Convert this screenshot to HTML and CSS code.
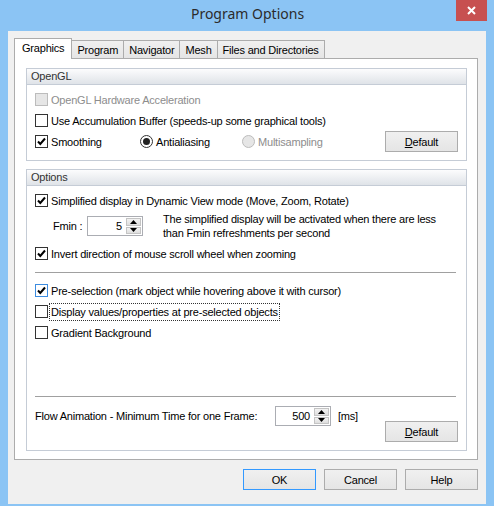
FILE: index.html
```html
<!DOCTYPE html>
<html lang="en">
<head>
  <meta charset="UTF-8">
  <meta name="viewport" content="width=device-width, initial-scale=1.0">
  <title>Program Options</title>
  <link rel="stylesheet" href="styles.css">
</head>
<body>
  <div class="window">
    <!-- Title bar -->
    <div class="titlebar">
      <div class="title">Program Options</div>
      <button class="close" title="Close">
        <svg width="9" height="9" viewBox="0 0 9 9"><path d="M1 1 L8 8 M8 1 L1 8" stroke="#fff" stroke-width="2"/></svg>
      </button>
    </div>

    <div class="client">
      <!-- Tabs -->
      <div class="tabs">
        <div class="tab active">Graphics</div>
        <div class="tab">Program</div>
        <div class="tab">Navigator</div>
        <div class="tab">Mesh</div>
        <div class="tab">Files and Directories</div>
      </div>

      <div class="panel">
        <!-- OpenGL group -->
        <div class="group">
          <div class="group-title">OpenGL</div>
          <div class="group-body">
            <div class="row disabled"><span class="check"></span>OpenGL Hardware Acceleration</div>
            <div class="row"><span class="check"></span>Use Accumulation Buffer (speeds-up some graphical tools)</div>
            <div class="row">
              <div class="cell smooth">
                <span class="check on"><svg viewBox="0 0 11 11"><path d="M2 5.5 L4.3 8 L9 2.5" fill="none" stroke="#000" stroke-width="2"/></svg></span>Smoothing
              </div>
              <div class="cell aa"><span class="radio on"></span>Antialiasing</div>
              <div class="cell disabled"><span class="radio"></span>Multisampling</div>
              <button class="btn push-right"><u>D</u>efault</button>
            </div>
          </div>
        </div>

        <!-- Options group -->
        <div class="group grow">
          <div class="group-title">Options</div>
          <div class="group-body column">
            <div class="row"><span class="check on"><svg viewBox="0 0 11 11"><path d="M2 5.5 L4.3 8 L9 2.5" fill="none" stroke="#000" stroke-width="2"/></svg></span>Simplified display in Dynamic View mode (Move, Zoom, Rotate)</div>

            <div class="fmin-row">
              <span class="fmin-label">Fmin :</span>
              <div class="spin">
                <span class="spin-value">5</span>
                <span class="spin-btns">
                  <span class="spin-btn"><svg width="7" height="4" viewBox="0 0 7 4"><path d="M0 4 L3.5 0 L7 4 Z" fill="#000"/></svg></span>
                  <span class="spin-btn"><svg width="7" height="4" viewBox="0 0 7 4"><path d="M0 0 L3.5 4 L7 0 Z" fill="#000"/></svg></span>
                </span>
              </div>
              <p class="hint">The simplified display will be activated when there are less<br>than Fmin refreshments per second</p>
            </div>

            <div class="row gap3"><span class="check on"><svg viewBox="0 0 11 11"><path d="M2 5.5 L4.3 8 L9 2.5" fill="none" stroke="#000" stroke-width="2"/></svg></span>Invert direction of mouse scroll wheel when zooming</div>

            <div class="sep"></div>

            <div class="row"><span class="check on hover"><svg viewBox="0 0 11 11"><path d="M2 5.5 L4.3 8 L9 2.5" fill="none" stroke="#000" stroke-width="2"/></svg></span>Pre-selection (mark object while hovering above it with cursor)</div>
            <div class="row"><span class="check"></span><span class="focus">Display values/properties at pre-selected objects</span></div>
            <div class="row"><span class="check"></span>Gradient Background</div>

            <div class="bottom">
              <div class="sep"></div>
              <div class="flow-row">
                <div class="flow-left">
                  <span class="flow-label">Flow Animation - Minimum Time for one Frame:</span>
                  <div class="spin">
                    <span class="spin-value">500</span>
                    <span class="spin-btns">
                      <span class="spin-btn"><svg width="7" height="4" viewBox="0 0 7 4"><path d="M0 4 L3.5 0 L7 4 Z" fill="#000"/></svg></span>
                      <span class="spin-btn"><svg width="7" height="4" viewBox="0 0 7 4"><path d="M0 0 L3.5 4 L7 0 Z" fill="#000"/></svg></span>
                    </span>
                  </div>
                  <span class="unit">[ms]</span>
                </div>
                <button class="btn push-right low"><u>D</u>efault</button>
              </div>
            </div>
          </div>
        </div>
      </div>

      <!-- Dialog buttons -->
      <div class="actions">
        <button class="btn default">OK</button>
        <button class="btn">Cancel</button>
        <button class="btn">Help</button>
      </div>
    </div>
  </div>
</body>
</html>
```

FILE: styles.css
```css
/* General */
* {
  box-sizing: border-box;
}
body {
  margin: 0;
  font-family: "Liberation Sans", Arial, sans-serif;
  font-size: 11px;
  letter-spacing: -0.2px;
  color: #000;
}
button {
  font: inherit;
  letter-spacing: inherit;
  color: inherit;
}

/* Window frame */
.window {
  width: 494px;
  height: 506px;
  background: #8bc4f4;
  display: flex;
  flex-direction: column;
  padding: 0 8px 2px;
}
.titlebar {
  height: 31px;
  margin: 0 -8px;
  padding: 0 7px 0 8px;
  display: grid;
  grid-template-columns: 1fr auto 1fr;
  align-items: start;
}
.title {
  grid-column: 2;
  font-family: "Noto Sans", sans-serif;
  font-size: 14px;
  letter-spacing: 0;
  line-height: 28px;
  color: #2b2b2b;
}
.close {
  grid-column: 3;
  justify-self: end;
  width: 31px;
  height: 21px;
  border: none;
  padding: 0;
  background: #c75050;
  display: flex;
  align-items: center;
  justify-content: center;
}

/* Client area */
.client {
  flex: 1;
  background: #f0f0f0;
  display: flex;
  flex-direction: column;
  padding: 7px 8px 14px 6px;
}

/* Tabs */
.tabs {
  display: flex;
  align-items: flex-end;
  height: 20px;
}
.tab {
  height: 18px;
  padding: 0 5px;
  margin-left: -1px;
  border: 1px solid #acacac;
  border-bottom: none;
  background: linear-gradient(#f0f0f0, #e5e5e5);
  line-height: 18px;
}
.tab.active {
  height: 21px;
  margin: 0 0 -1px 0;
  padding: 0 7px;
  background: #fff;
  line-height: 19px;
  position: relative;
  z-index: 1;
}
.panel {
  flex: 1;
  border: 1px solid #acacac;
  background: #fff;
  padding: 9px 10px 8px 11px;
  display: flex;
  flex-direction: column;
  gap: 8px;
}

/* Group boxes */
.group {
  border: 1px solid #c5ccd6;
  display: flex;
  flex-direction: column;
}
.group.grow {
  flex: 1;
}
.group-title {
  height: 16px;
  border-bottom: 1px solid #c5ccd6;
  background: linear-gradient(#fcfcfd, #dfe3e8);
  padding-left: 4px;
  line-height: 15px;
  color: #333;
}
.group-body {
  padding: 4px 8px 8px;
}
.group-body.column {
  flex: 1;
  display: flex;
  flex-direction: column;
}
.row {
  display: flex;
  align-items: center;
  height: 21px;
  white-space: nowrap;
}
.row.gap3 {
  margin-top: 3px;
}
.cell {
  display: flex;
  align-items: center;
}
.cell.smooth {
  width: 105px;
}
.cell.aa {
  width: 102px;
}
.disabled {
  color: #8d8d8d;
}
.push-right {
  margin-left: auto;
}

/* Check boxes and radios */
.check {
  width: 13px;
  height: 13px;
  flex: none;
  margin-right: 3px;
  border: 1px solid #333;
  background: #fff;
  display: flex;
}
.check svg {
  width: 11px;
  height: 11px;
}
.check.hover {
  border-color: #3c8ce0;
}
.disabled .check,
.disabled .radio {
  border-color: #bcbcbc;
  background: #e6e6e6;
}
.radio {
  width: 13px;
  height: 13px;
  flex: none;
  margin-right: 3px;
  border: 1px solid #333;
  border-radius: 50%;
  background: #fff;
  display: flex;
  align-items: center;
  justify-content: center;
}
.radio.on::after {
  content: "";
  width: 7px;
  height: 7px;
  border-radius: 50%;
  background: #222;
}
.focus {
  margin-left: -2px;
  padding: 0 1px;
  border: 1px dotted #333;
  line-height: 16px;
}

/* Spin boxes */
.fmin-row {
  display: flex;
  align-items: center;
  margin-top: 1px;
  padding-left: 18px;
}
.fmin-label {
  width: 34px;
}
.hint {
  margin: 0 0 0 20px;
  line-height: 14px;
}
.spin {
  width: 56px;
  height: 20px;
  flex: none;
  border: 1px solid #abadb3;
  background: #fff;
  padding: 1px;
  display: flex;
}
.spin-value {
  flex: 1;
  text-align: right;
  padding-right: 4px;
  line-height: 16px;
}
.spin-btns {
  width: 15px;
  display: flex;
  flex-direction: column;
  gap: 1px;
}
.spin-btn {
  flex: 1;
  border: 1px solid #c4c4c4;
  background: linear-gradient(#f3f3f3, #dedede);
  display: flex;
  align-items: center;
  justify-content: center;
}

/* Separators and bottom row */
.sep {
  height: 1px;
  background: #a0a0a0;
  margin: 8px 2px 7px 0;
}
.bottom {
  margin-top: auto;
}
.bottom .sep {
  margin: 0 2px 9px 0;
}
.flow-row {
  display: flex;
  align-items: flex-start;
}
.flow-left {
  display: flex;
  align-items: center;
}
.flow-label {
  width: 240px;
}
.unit {
  margin-left: 7px;
}

/* Buttons */
.btn {
  width: 73px;
  height: 21px;
  padding: 0;
  border: 1px solid #acacac;
  background: linear-gradient(#f0f0f0, #e5e5e5);
  text-align: center;
}
.btn.low {
  margin-top: 15px;
}
.btn.default {
  border-color: #3399ff;
}
.actions {
  display: flex;
  justify-content: flex-end;
  gap: 8px;
  margin-top: 9px;
}
```
